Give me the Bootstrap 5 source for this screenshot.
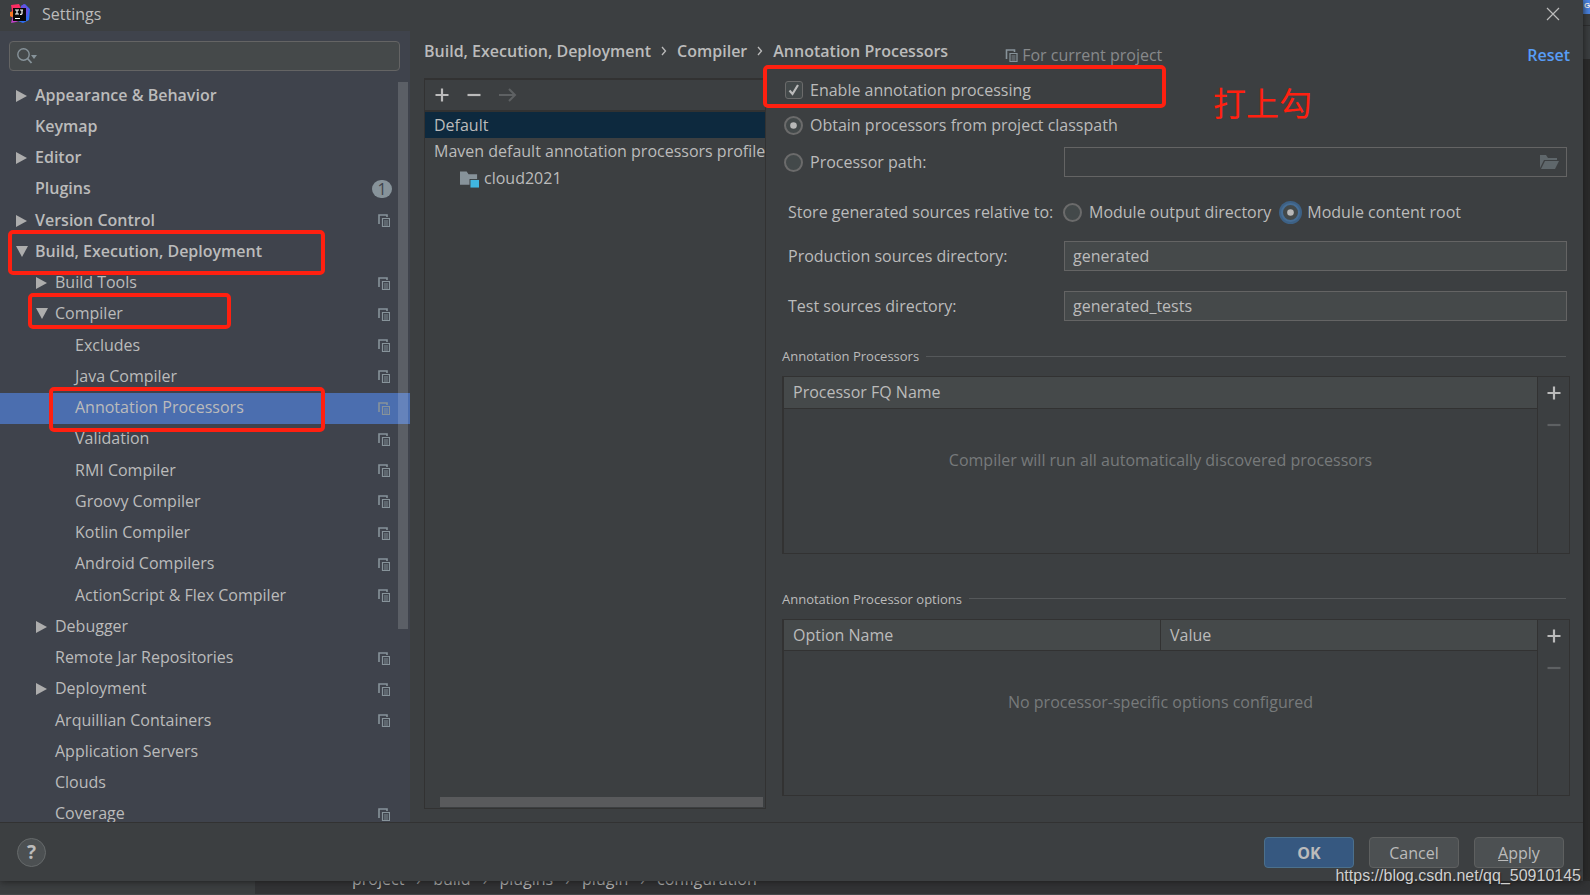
<!DOCTYPE html>
<html lang="en">
<head>
<meta charset="utf-8">
<meta name="viewport" content="width=device-width, initial-scale=1">
<title>Settings</title>
<link rel="stylesheet" href="https://cdn.jsdelivr.net/npm/bootstrap@5.3.0/dist/css/bootstrap.min.css">
<style>
  :root { --panel:#3c3f41; --line:#323232; --side:#3f434c; --ink:#bbbbbb; --red:#ff2010; }
  body { background:#2b2b2b; color:var(--ink); font:16px/24px "Open Sans","Noto Sans CJK SC",sans-serif; height:100vh; min-height:700px; overflow:hidden; }
  svg { display:block; flex:none; }
  button { color:inherit; }
  .semi { font-weight:600; }
  .tool-btn { background:none; border:0; padding:0; }
  .tool-btn:disabled { color:#5e6163; }

  .dialog { background:var(--panel); box-shadow:0 0 8px #1a1a1a; z-index:1; }
  .titlebar { height:31px; padding:0 23px 4px 9px; }
  .sidebar { width:410px; background:var(--side); }
  .search-box { margin:10px 10px 9px 9px; height:30px; border:1px solid #646464; border-radius:4px; background:#45494a; padding-left:7px; color:#87939a; }
  .search-box input { background:none; border:0; outline:0; color:var(--ink); }
  .tree-area { overflow:hidden; }
  .tree-list { display:grid; grid-auto-rows:1fr; height:calc(100% + 8px); }
  .tree-list li { display:flex; align-items:center; padding:0 20px 0 16px; position:relative; min-height:26px; }
  .tree-list a { color:inherit; text-decoration:none; flex:1; white-space:nowrap; padding-bottom:2px; }
  .tree-list .tw { width:19px; flex:none; color:#adadad; }
  .tree-list .lv1 { padding-left:36px; }
  .tree-list .lv2 { padding-left:56px; }
  .tree-list .lv0 { font-weight:600; }
  .tree-list .current { background:#4b6eaf; }
  .copy-ico { color:#87939a; }
  .count { width:20px; height:18px; border-radius:9px; background:#87939a; color:#3f434c; font-weight:400; line-height:18px; text-align:center; margin-right:-2px; }
  .thumb-v { position:absolute; right:2px; top:2px; width:10px; bottom:193px; background:rgba(255,255,255,.15); }
  .mark-box { position:absolute; border:4px solid var(--red); border-radius:5px; pointer-events:none; }
  .mk-build { left:8px; top:-6px; width:317px; height:45px; }
  .mk-compiler { left:28px; top:-6px; width:203px; height:36px; }
  .mk-annot { left:49px; top:-6px; width:276px; height:45px; }
  .mk-enable { left:-19px; top:-13px; width:403px; height:43px; }
  .note { position:absolute; left:431px; top:0; font:33px/48px "Noto Sans CJK SC",sans-serif; color:var(--red); white-space:nowrap; }

  .crumbs { height:47px; padding:8px 13px 0 14px; }
  .crumbs ol { list-style:none; display:flex; margin:0; padding:0; gap:10px; align-items:center; }
  .scope { color:#87898b; margin:4px 0 0 57px; }
  .reset { color:#589df6; text-decoration:none; margin-top:4px; }
  .profiles { width:342px; margin:0 16px 13px 14px; border:1px solid var(--line); border-top-width:2px; overflow:hidden; }
  .profiles .bar { height:32px; border-bottom:2px solid var(--line); padding-left:10px; gap:18px; }
  .profiles ul { white-space:nowrap; }
  .profiles li { height:27px; line-height:27px; padding-left:9px; }
  .profiles .picked { background:#0d293e; height:26px; line-height:26px; }
  .profiles .module { padding-left:35px; gap:5px; }
  .thumb-h { height:10px; margin:auto 2px 1px 15px; background:#595a5c; }

  .form-side { padding:0 12px 26px 0; }
  .opt { display:flex; align-items:center; height:24px; gap:7px; }
  .opt label { padding-bottom:1px; }
  .lead-in { padding-left:2px; }
  .cap { padding:0 0 1px 6px; }
  .form-side .form-check-input { margin:0; float:none; background-color:#43494a; border:2px solid #6b6b6b; width:19px; height:19px; flex:none; }
  .form-side .form-check-input[type=checkbox] { width:18px; height:18px; border-radius:3px; border-width:1px; margin-left:1px; }
  .form-side .form-check-input[type=checkbox]:checked { background-size:18px; background-image:url("data:image/svg+xml,%3csvg xmlns='http://www.w3.org/2000/svg' viewBox='0 0 18 18'%3e%3cpath fill='none' stroke='%23bbb' stroke-width='2.2' d='M4.5 9.5l3 3.5 5.500-9'/%3e%3c/svg%3e"); }
  .form-side .form-check-input[type=radio]:checked { background-size:19px; background-image:url("data:image/svg+xml,%3csvg xmlns='http://www.w3.org/2000/svg' viewBox='0 0 19 19'%3e%3ccircle cx='9.5' cy='9.500' r='3.300' fill='%23b8b8b8'/%3e%3c/svg%3e"); }
  .form-side .form-check-input.focused { border-color:#466d94; box-shadow:0 0 0 2px #3d6185; }
  .pair { display:grid; grid-template-columns:282px 1fr; align-items:center; padding-right:4px; }
  .field { height:30px; border:1px solid #646464; border-radius:0; background:#45494a; color:var(--ink); padding:0 8px 1px; width:100%; outline:0; }
  .path-field { height:30px; border:1px solid #646464; padding-right:6px; color:#5f676b; }
  .path-field input { background:none; border:0; outline:0; }
  .group { font-size:13px; line-height:20px; display:flex; align-items:center; gap:7px; margin:0 5px 10px 0; font-weight:400; }
  .group::after { content:""; flex:1; height:1px; background:#55585a; }
  .grid-box { border:1px solid var(--line); border-left-width:2px; min-height:110px; flex:1 1 0; margin-right:1px; }
  .grid-box table { width:100%; table-layout:fixed; }
  .grid-box th { height:31px; padding:0 9px; font-weight:400; background:#45494a; border-bottom:1px solid var(--line); }
  .grid-box th + th { border-left:1px solid var(--line); }
  .grid-box td { text-align:center; padding-top:39px; color:#777a7b; }
  .grid-tools { width:32px; flex:none; border-left:1px solid var(--line); padding-top:9px; gap:18px; }

  .foot { height:59px; border-top:1px solid var(--line); padding:0 19px 0 17px; }
  .help { width:29px; height:29px; border-radius:50%; border:1px solid #666a6b; background:#4c5052; font:700 19px/26px "Open Sans",sans-serif; padding:0; }
  .dlg-btn { width:90px; height:31px; padding:1px 0 0; border:1px solid #5e6060; border-radius:4px; background:#4c5052; color:var(--ink); font-size:16px; line-height:24px; }
  .dlg-btn.ok { background:#365880; border-color:#4c708c; font-weight:700; }
  .watermark { position:absolute; right:2px; bottom:-7px; font:16px/24px "Liberation Sans",sans-serif; color:#d0d0d0; text-shadow:1px 1px 1px #222; white-space:nowrap; }

  .edge { width:7px; background:linear-gradient(#3c3f41 25px,#2e2f30 25px,#2e2f30 26px,#3c3f41 26px,#3c3f41 59px,#2b2b2b 59px); overflow:hidden; }
  .edge span { display:block; height:14px; background:#4a86e8; color:#fff; font:700 8px/12px "Liberation Sans",sans-serif; padding-left:1px; }
  .behind { height:14px; overflow:hidden; background:#323335; border-bottom:1px solid #45484a; }
  .behind .stub { width:255px; background:var(--panel); margin-right:97px; }
  .behind ol { list-style:none; display:flex; gap:12px; margin:-14px 0 0; padding:0; line-height:24px; }
</style>
</head>
<body class="d-flex flex-column">
<svg width="0" height="0" class="position-absolute" aria-hidden="true">
  <symbol id="copy" viewBox="0 0 12 13"><path d="M1 10V1h8v2" fill="none" stroke="currentColor" stroke-width="1.600"/><path d="M4.500 4.500h7v8h-7z" fill="none" stroke="currentColor" stroke-width="1.200"/><path d="M6 7h4M6 9h4M6 11h4" stroke="currentColor" stroke-width=".9"/></symbol>
  <symbol id="right" viewBox="0 0 12 12"><path d="M0 0l11 6-11 6z" fill="currentColor"/></symbol>
  <symbol id="down" viewBox="0 0 12 12"><path d="M0 0h12L6 11z" fill="currentColor"/></symbol>
  <symbol id="plus" viewBox="0 0 14 14"><path d="M7 .5v13M.5 7h13" stroke="currentColor" stroke-width="2.200"/></symbol>
  <symbol id="minus" viewBox="0 0 14 14"><path d="M.5 7h13" stroke="currentColor" stroke-width="2.200"/></symbol>
</svg>
<div class="d-flex flex-fill" style="min-height:0">
  <div class="dialog d-flex flex-column flex-fill position-relative">
    <header class="titlebar d-flex align-items-center">
      <svg width="22" height="20" viewBox="0 0 22 20"><path d="M2 1l8-1 4 8-8 6-5-2 2-5z" fill="#fc2d63"/><path d="M1 8l4-1v7l-4-2z" fill="#f97a24"/><path d="M2 19l2-7 8 4-5 2z" fill="#c040c8"/><path d="M12 2l4-2 5 5-1 11-6 3-5-2 3-5z" fill="#2d6df0"/><path d="M12 2l3-2 5 5-2 8z" fill="#6a50e0"/><path d="M4 4h13v13H4z" fill="#080808"/><path d="M6 6h4M8 6v4M6 10h4M11 6h3M13 6v3.500q0 1-2 .8M6 14.500h5" fill="none" stroke="#fff" stroke-width="1.200"/></svg>
      <span class="me-auto" style="margin-left:11px">Settings</span>
      <button class="tool-btn" type="button" aria-label="Close"><svg width="14" height="14" viewBox="0 0 14 14"><path d="M1 1l12 12M13 1L1 13" stroke="currentColor" stroke-width="1.200"/></svg></button>
    </header>
    <div class="d-flex flex-fill" style="min-height:0">
      <nav class="sidebar d-flex flex-column flex-shrink-0" aria-label="Settings sections">
        <div class="search-box d-flex align-items-center flex-shrink-0">
          <svg width="20" height="16" viewBox="0 0 20 16"><circle cx="6.500" cy="6.500" r="5.700" fill="none" stroke="currentColor" stroke-width="1.400"/><path d="M10.500 10.500l4 4.500" stroke="currentColor" stroke-width="1.800"/><path d="M14 7h6l-3 4z" fill="currentColor"/></svg>
          <input type="text" class="flex-fill" aria-label="Search settings">
        </div>
        <div class="tree-area flex-fill position-relative">
          <ul class="tree-list list-unstyled m-0" id="tree"></ul>
          <div class="thumb-v"></div>
        </div>
      </nav>
      <main class="d-flex flex-column flex-fill">
        <div class="crumbs d-flex align-items-start flex-shrink-0">
          <ol class="semi">
            <li>Build, Execution, Deployment</li>
            <li aria-hidden="true"><svg width="6" height="10" viewBox="0 0 6 10"><path d="M1 1l3.500 4L1 9" fill="none" stroke="currentColor" stroke-width="1.300"/></svg></li>
            <li>Compiler</li>
            <li aria-hidden="true"><svg width="6" height="10" viewBox="0 0 6 10"><path d="M1 1l3.500 4L1 9" fill="none" stroke="currentColor" stroke-width="1.300"/></svg></li>
            <li>Annotation Processors</li>
          </ol>
          <span class="scope d-flex align-items-center"><svg class="copy-ico me-1" width="13" height="13"><use href="#copy"/></svg>For current project</span>
          <a href="#" class="reset semi ms-auto">Reset</a>
        </div>
        <div class="d-flex flex-fill" style="min-height:0">
          <section class="profiles d-flex flex-column flex-shrink-0">
            <div class="bar d-flex align-items-center flex-shrink-0">
              <button class="tool-btn" type="button" aria-label="Add"><svg width="14" height="14"><use href="#plus"/></svg></button>
              <button class="tool-btn" type="button" aria-label="Remove"><svg width="14" height="14"><use href="#minus"/></svg></button>
              <button class="tool-btn" type="button" aria-label="Move" disabled><svg width="18" height="14" viewBox="0 0 18 14"><path d="M0 7h16M10 1l6 6-6 6" fill="none" stroke="currentColor" stroke-width="2"/></svg></button>
            </div>
            <ul class="list-unstyled m-0">
              <li class="picked">Default</li>
              <li>Maven default annotation processors profile</li>
              <li class="module d-flex align-items-center"><svg width="19" height="18" viewBox="0 0 20 18"><path d="M0 1h7l2 3h9v5h-8v6H0z" fill="#87939a"/><path d="M11 10h9v8h-9z" fill="#40b6e0"/></svg>cloud2021</li>
            </ul>
            <div class="thumb-h flex-shrink-0"></div>
          </section>
          <form class="form-side d-flex flex-column flex-fill">
            <div class="position-relative flex-shrink-0">
              <div class="opt lead-in"><input class="form-check-input" type="checkbox" id="enable" checked><label for="enable">Enable annotation processing</label></div>
              <div class="mark-box mk-enable"></div>
              <div class="note">打上勾</div>
            </div>
            <div class="opt lead-in flex-shrink-0" style="margin-top:11px"><input class="form-check-input" type="radio" name="src" id="obtain" checked><label for="obtain">Obtain processors from project classpath</label></div>
            <div class="pair flex-shrink-0" style="margin-top:10px">
              <div class="opt lead-in"><input class="form-check-input" type="radio" name="src" id="ppath"><label for="ppath">Processor path:</label></div>
              <div class="path-field d-flex align-items-center"><input type="text" class="flex-fill" aria-label="Processor path" disabled>
                <svg width="20" height="15" viewBox="0 0 20 15"><path d="M0 13V0h6l2 3h9v2H4z" fill="currentColor"/><path d="M5 6h14l-4 8H1z" fill="currentColor"/></svg></div>
            </div>
            <div class="pair flex-shrink-0" style="margin-top:23px">
              <span class="cap">Store generated sources relative to:</span>
              <div class="d-flex" style="gap:10px;margin-left:-1px">
                <div class="opt"><input class="form-check-input" type="radio" name="rel" id="rout"><label for="rout">Module output directory</label></div>
                <div class="opt"><input class="form-check-input focused" type="radio" name="rel" id="rroot" checked><label for="rroot">Module content root</label></div>
              </div>
            </div>
            <div class="pair mt-3 flex-shrink-0"><label for="prod" class="cap">Production sources directory:</label><input class="field" id="prod" type="text" value="generated"></div>
            <div class="pair flex-shrink-0" style="margin-top:20px"><label for="test" class="cap">Test sources directory:</label><input class="field" id="test" type="text" value="generated_tests"></div>
            <h2 class="group flex-shrink-0" style="margin-top:25px">Annotation Processors</h2>
            <div class="grid-box d-flex">
              <div class="flex-fill"><table><thead><tr><th>Processor FQ Name</th></tr></thead><tbody><tr><td>Compiler will run all automatically discovered processors</td></tr></tbody></table></div>
              <div class="grid-tools d-flex flex-column align-items-center">
                <button class="tool-btn" type="button" aria-label="Add processor"><svg width="14" height="14"><use href="#plus"/></svg></button>
                <button class="tool-btn" type="button" aria-label="Remove processor" disabled><svg width="14" height="14"><use href="#minus"/></svg></button>
              </div>
            </div>
            <h2 class="group flex-shrink-0" style="margin-top:35px">Annotation Processor options</h2>
            <div class="grid-box d-flex">
              <div class="flex-fill"><table><thead><tr><th>Option Name</th><th>Value</th></tr></thead><tbody><tr><td colspan="2">No processor-specific options configured</td></tr></tbody></table></div>
              <div class="grid-tools d-flex flex-column align-items-center">
                <button class="tool-btn" type="button" aria-label="Add option"><svg width="14" height="14"><use href="#plus"/></svg></button>
                <button class="tool-btn" type="button" aria-label="Remove option" disabled><svg width="14" height="14"><use href="#minus"/></svg></button>
              </div>
            </div>
          </form>
        </div>
      </main>
    </div>
    <footer class="foot d-flex align-items-center flex-shrink-0">
      <button class="help me-auto" type="button" aria-label="Help">?</button>
      <div class="d-flex" style="gap:15px">
        <button class="dlg-btn ok" type="button">OK</button>
        <button class="dlg-btn" type="button">Cancel</button>
        <button class="dlg-btn" type="button"><u>A</u>pply</button>
      </div>
    </footer>
    <div class="watermark">https://blog.csdn.net/qq_50910145</div>
  </div>
  <div class="edge flex-shrink-0"><span>G</span></div>
</div>
<div class="behind d-flex flex-shrink-0">
  <div class="stub flex-shrink-0"></div>
  <ol><li>project</li><li>›</li><li>build</li><li>›</li><li>plugins</li><li>›</li><li>plugin</li><li>›</li><li>configuration</li></ol>
</div>
<script src="https://cdn.jsdelivr.net/npm/bootstrap@5.3.0/dist/js/bootstrap.bundle.min.js"></script>
<script>
  // level, label, twisty, copy icon, highlight box
  const rows = [
    [0,'Appearance & Behavior','right'],[0,'Keymap'],[0,'Editor','right'],[0,'Plugins','',0],
    [0,'Version Control','right',1],[0,'Build, Execution, Deployment','down',0,'mk-build'],
    [1,'Build Tools','right',1],[1,'Compiler','down',1,'mk-compiler'],[2,'Excludes','',1],
    [2,'Java Compiler','',1],[2,'Annotation Processors','',1,'mk-annot'],[2,'Validation','',1],
    [2,'RMI Compiler','',1],[2,'Groovy Compiler','',1],[2,'Kotlin Compiler','',1],
    [2,'Android Compilers','',1],[2,'ActionScript & Flex Compiler','',1],[1,'Debugger','right'],
    [1,'Remote Jar Repositories','',1],[1,'Deployment','right',1],[1,'Arquillian Containers','',1],
    [1,'Application Servers'],[1,'Clouds'],[1,'Coverage','',1]
  ];
  document.getElementById('tree').innerHTML = rows.map(([lv, label, tw, copy, box]) =>
    `<li class="lv${lv}${label === 'Annotation Processors' ? ' current' : ''}">
      <span class="tw">${tw ? `<svg width="12" height="12"><use href="#${tw}"/></svg>` : ''}</span>
      <a href="#">${label.replace('&', '&amp;')}</a>
      ${label === 'Plugins' ? '<span class="count">1</span>' : ''}
      ${copy ? '<svg class="copy-ico" width="12" height="13"><use href="#copy"/></svg>' : ''}
      ${box ? `<div class="mark-box ${box}"></div>` : ''}
    </li>`).join('');
</script>
</body>
</html>
